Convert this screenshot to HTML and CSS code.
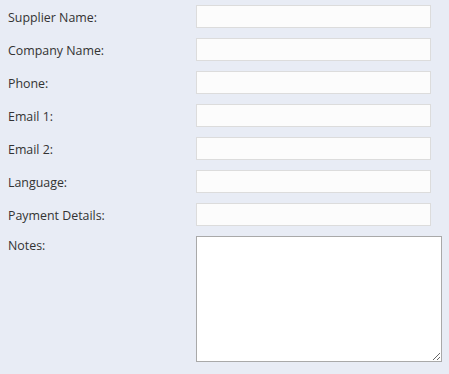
FILE: index.html
```html
<!DOCTYPE html>
<html lang="en">
<head>
  <meta charset="UTF-8" />
  <title>Supplier</title>
  <link rel="stylesheet" href="styles.css">
</head>
<body>
  <form class="supplier-form">
    <label class="field-label">Supplier Name:</label>
    <input class="field-input" type="text" />

    <label class="field-label">Company Name:</label>
    <input class="field-input" type="text" />

    <label class="field-label">Phone:</label>
    <input class="field-input" type="text" />

    <label class="field-label">Email 1:</label>
    <input class="field-input" type="text" />

    <label class="field-label">Email 2:</label>
    <input class="field-input" type="text" />

    <label class="field-label">Language:</label>
    <input class="field-input" type="text" />

    <label class="field-label">Payment Details:</label>
    <input class="field-input" type="text" />

    <label class="field-label notes-label">Notes:</label>
    <textarea class="notes-input"></textarea>
  </form>
</body>
</html>
```

FILE: styles.css
```css
body {
  margin: 0;
  background: #e8ecf5;
  font-family: 'Open Sans', sans-serif;
  font-size: 12.4px;
  color: #333;
}

.supplier-form {
  display: grid;
  grid-template-columns: 188px 1fr;
  row-gap: 10px;
  padding: 5px 0 0 8px;
}

.field-label {
  align-self: center;
  line-height: 16px;
  padding-top: 2px;
}

.notes-label {
  align-self: start;
  padding-top: 2px;
}

.field-input {
  box-sizing: border-box;
  width: 235px;
  height: 23px;
  margin: 0;
  border: 1px solid #dcdcdc;
  background: #fcfcfc;
  padding: 2px 4px;
  font: inherit;
}

.notes-input {
  box-sizing: border-box;
  width: 246px;
  height: 126px;
  margin: 0;
  border: 1px solid #a9a9a9;
  background: #fff;
  font: inherit;
}
```
